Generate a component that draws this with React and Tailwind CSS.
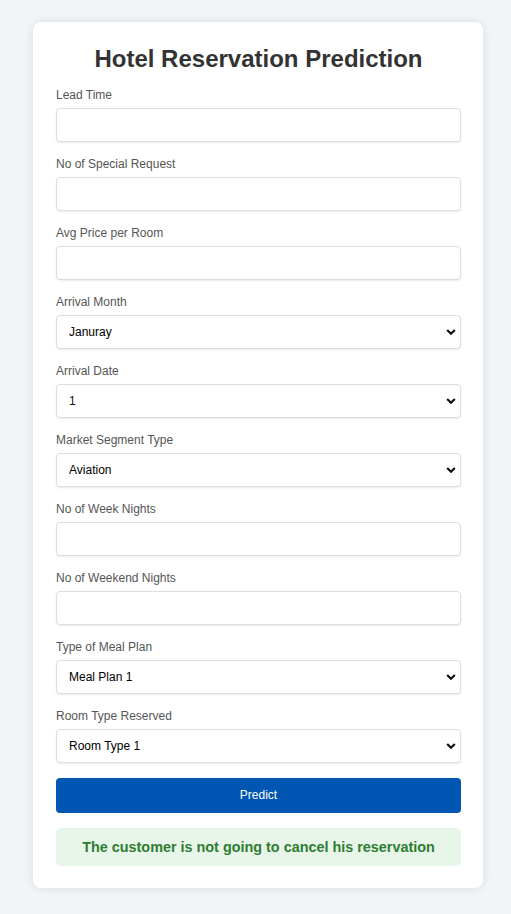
import React from "react";

function Chevron() {
  return (
    <svg className="pointer-events-none absolute right-[5px] top-1/2 -translate-y-1/2" width="10" height="7" viewBox="0 0 10 7">
      <path d="M1.2 1.5 L5 5.2 L8.8 1.5" fill="none" stroke="#111" strokeWidth="2.2" />
    </svg>
  );
}

function Field({ label, children }) {
  return (
    <div className="mb-[15px]">
      <label className="mb-[6px] block text-[12px] leading-[14px] text-[#555]">{label}</label>
      {children}
    </div>
  );
}

function TextInput() {
  return (
    <input
      type="text"
      className="block h-[34px] w-full rounded-[4px] border border-[#ddd] bg-white px-[12px] text-[12px] text-black shadow-[0_1px_2px_rgba(0,0,0,0.08)] outline-none"
    />
  );
}

function Select({ options, textClass = "text-black" }) {
  return (
    <div className="relative">
      <select
        className={`block h-[34px] w-full appearance-none rounded-[4px] border border-[#ddd] bg-white pl-[12px] text-[12px] ${textClass} shadow-[0_1px_2px_rgba(0,0,0,0.08)] outline-none`}
      >
        {options.map((o) => (
          <option key={o}>{o}</option>
        ))}
      </select>
      <Chevron />
    </div>
  );
}

export default function App() {
  const months = ["Januray", "February", "March", "April", "May", "June", "July", "August", "September", "October", "November", "December"];
  const dates = Array.from({ length: 31 }, (_, i) => String(i + 1));
  return (
    <div className="min-h-[914px] bg-[#f2f5f8] pl-[33px] pt-[22px] font-['Liberation_Sans',Arial,sans-serif]">
      <div className="w-[450px] rounded-[8px] bg-white pb-[22px] pl-[23px] pr-[22px] pt-[23px] shadow-[0_0_10px_rgba(0,0,0,0.1)]">
        <h2 className="mb-[15px] text-center text-[24px] font-bold leading-[28px] text-[#333]">Hotel Reservation Prediction</h2>
        <Field label="Lead Time"><TextInput /></Field>
        <Field label="No of Special Request"><TextInput /></Field>
        <Field label="Avg Price per Room"><TextInput /></Field>
        <Field label="Arrival Month"><Select options={months} /></Field>
        <Field label="Arrival Date"><Select options={dates} textClass="text-[#1a0a2a]" /></Field>
        <Field label="Market Segment Type"><Select options={["Aviation", "Complementary", "Corporate", "Offline", "Online"]} /></Field>
        <Field label="No of Week Nights"><TextInput /></Field>
        <Field label="No of Weekend Nights"><TextInput /></Field>
        <Field label="Type of Meal Plan"><Select options={["Meal Plan 1", "Meal Plan 2", "Meal Plan 3", "Not Selected"]} /></Field>
        <Field label="Room Type Reserved"><Select options={["Room Type 1", "Room Type 2", "Room Type 3", "Room Type 4", "Room Type 5", "Room Type 6", "Room Type 7"]} /></Field>
        <button className="block h-[35px] w-full rounded-[4px] bg-[#0056b3] pb-[1px] text-[12px] text-white">Predict</button>
        <div className="mt-[15px] flex h-[38px] items-center justify-center rounded-[5px] bg-[#e8f5e9] pt-[2px] text-[14.4px] font-bold text-[#2e7d32]">
          The customer is not going to cancel his reservation
        </div>
      </div>
    </div>
  );
}
